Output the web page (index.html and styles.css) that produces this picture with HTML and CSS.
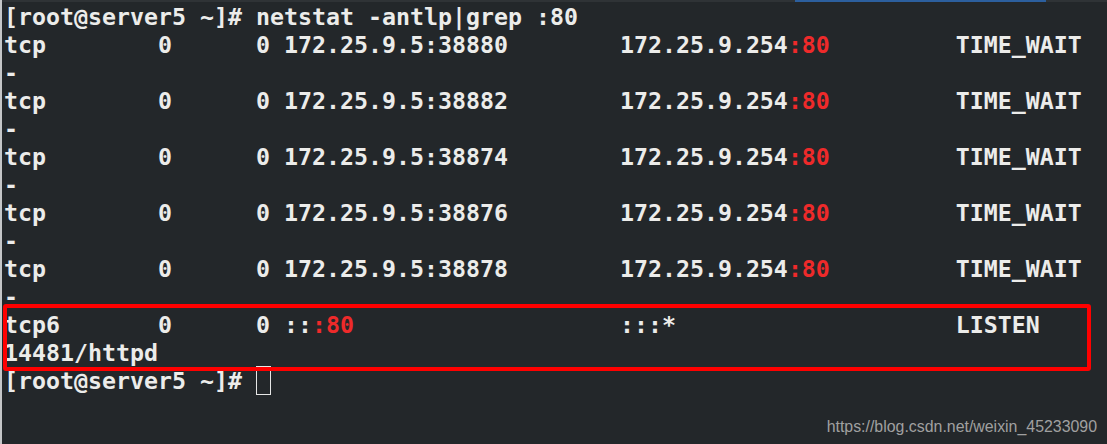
FILE: index.html
```html
<!DOCTYPE html>
<html>
<head>
<meta charset="utf-8">
<link rel="stylesheet" href="styles.css">
</head>
<body>
<div class="screen">
  <div class="tabbar"><div class="tab-active"></div></div>
  <div class="term">
    <div class="line">[root@server5 ~]# netstat -antlp|grep :80</div>
    <div class="line">tcp        0      0 172.25.9.5:38880        172.25.9.254<span class="hl">:80</span>         TIME_WAIT</div>
    <div class="line">-</div>
    <div class="line">tcp        0      0 172.25.9.5:38882        172.25.9.254<span class="hl">:80</span>         TIME_WAIT</div>
    <div class="line">-</div>
    <div class="line">tcp        0      0 172.25.9.5:38874        172.25.9.254<span class="hl">:80</span>         TIME_WAIT</div>
    <div class="line">-</div>
    <div class="line">tcp        0      0 172.25.9.5:38876        172.25.9.254<span class="hl">:80</span>         TIME_WAIT</div>
    <div class="line">-</div>
    <div class="line">tcp        0      0 172.25.9.5:38878        172.25.9.254<span class="hl">:80</span>         TIME_WAIT</div>
    <div class="line">-</div>
    <div class="line">tcp6       0      0 ::<span class="hl">:80</span>                   :::*                    LISTEN</div>
    <div class="line">14481/httpd</div>
    <div class="line">[root@server5 ~]# <span class="cursor"></span></div>
  </div>
  <div class="mark"></div>
  <div class="watermark">https://blog.csdn.net/weixin_45233090</div>
</div>
</body>
</html>
```
FILE: styles.css
```css
html, body {
  margin: 0;
  padding: 0;
}
body {
  width: 1107px;
  height: 444px;
  overflow: hidden;
  background: #23272a;
}
.screen {
  position: relative;
  width: 1107px;
  height: 444px;
  box-sizing: border-box;
  background: #23272a;
  border-left: 2px solid #c4c6c8;
}
.tabbar {
  height: 2px;
  background: #2f3336;
  position: relative;
}
.tab-active {
  position: absolute;
  left: 793px;
  top: 0;
  width: 251px;
  height: 2px;
  background: #2c5f9e;
}
.term {
  padding: 1px 0 0 2px;
  font-family: "DejaVu Sans Mono", monospace;
  font-weight: bold;
  font-size: 23.25px;
  line-height: 28px;
  color: #ececea;
}
.line {
  white-space: pre;
  height: 28px;
}
.hl {
  color: #ee2a2a;
}
.cursor {
  display: inline-block;
  width: 13px;
  height: 27px;
  border: 1px solid #e6e6e6;
  vertical-align: top;
  box-sizing: content-box;
  margin-top: -1px;
}
.mark {
  position: absolute;
  left: 1px;
  top: 304px;
  width: 1080px;
  height: 59px;
  border: 4px solid #ff0000;
  border-radius: 3px;
}
.watermark {
  position: absolute;
  right: 10px;
  bottom: 8px;
  font-family: "Liberation Sans", Arial, sans-serif;
  font-size: 15.9px;
  color: #a0a0a0;
}
```
